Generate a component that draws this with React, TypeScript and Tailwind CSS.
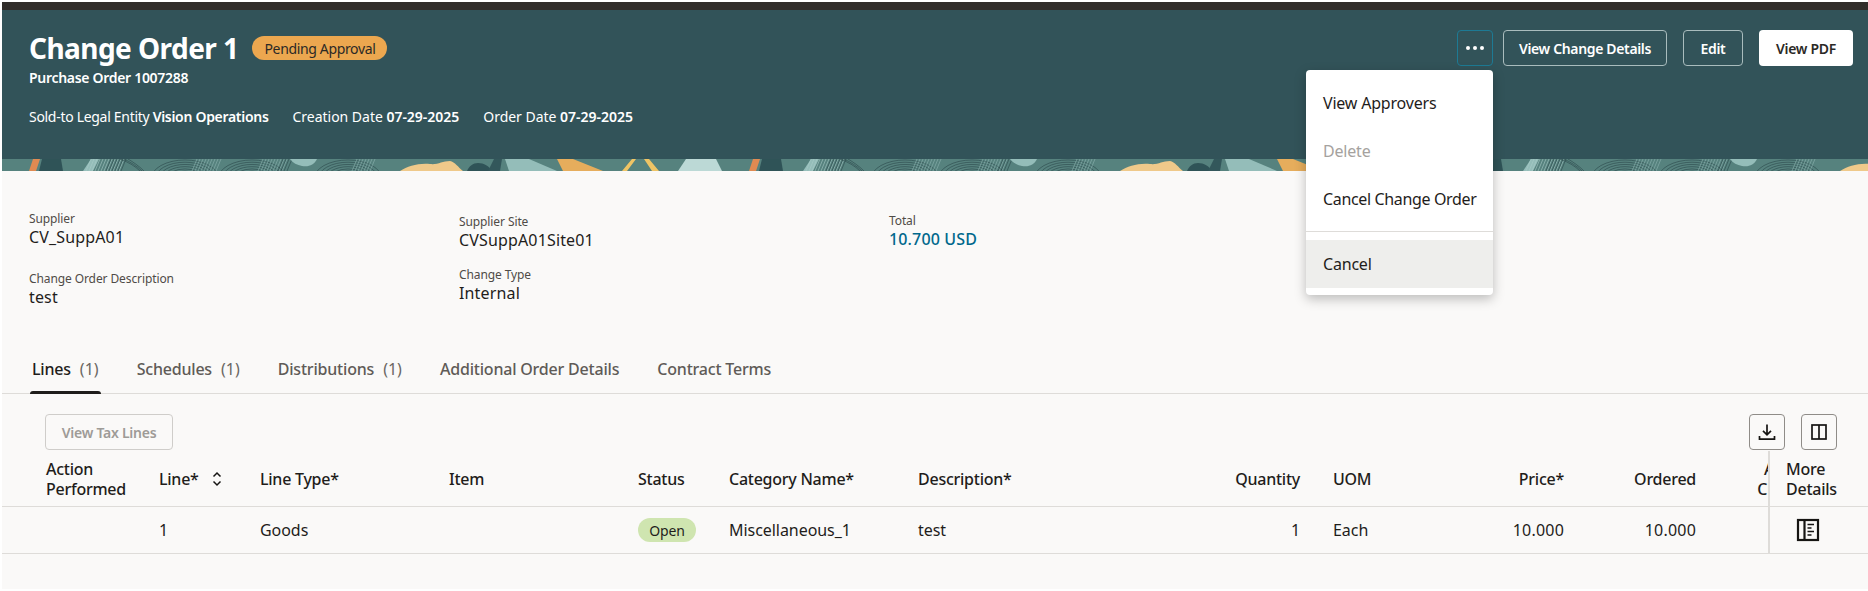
import React from "react";

function Banner() {
  const ellipses = (cx: number) => (
    <g fill="none" stroke="#2a474a" strokeWidth="0.6">
      {[14, 18, 22, 26, 30, 34].map((r) => (
        <ellipse key={r} cx={cx} cy={20} rx={r} ry={r * 0.56} />
      ))}
    </g>
  );
  const hatch = (x: number, n: number, color: string) => (
    <g stroke={color} strokeWidth="0.6">
      {Array.from({ length: n }).map((_, i) => (
        <line key={i} x1={x + i * 3} y1={12} x2={x + i * 3 + 5} y2={0} />
      ))}
    </g>
  );
  const unit = (ox: number) => (
    <g key={ox} transform={`translate(${ox} 0)`}>
      <path d="M27 12l4-12h7l-4 12z" fill="#e08a52" />
      <path d="M37 12l3-12h19l2 12z" fill="#2f5357" />
      <path d="M81 12l8-12h8l-6 12z" fill="#94bdb9" />
      {hatch(84, 12, "#a9cbc7")}
      {hatch(104, 6, "#2a474a")}
      <path d="M122 0c6 3 13 7 18 12M118 0c8 3 15 7 20 12M126 0c5 3 11 7 16 12" stroke="#2a474a" strokeWidth="0.6" fill="none" />
      {ellipses(183)}
      {hatch(190, 9, "#8fb5b1")}
      {ellipses(250)}
      {hatch(256, 9, "#8fb5b1")}
      {hatch(276, 4, "#2a474a")}
      <path d="M288 0h27c-3 6-8 8-15 7-5-1-9-3-12-7z" fill="#94bdb9" />
      {ellipses(346)}
      {hatch(350, 7, "#8fb5b1")}
      <path d="M398 12c8-5 18-8 30-7 8 1 12-3 20-3 5 1 8 6 13 10z" fill="#efc98a" />
      <path d="M465 12c2-5 6-8 11-8 6 0 11 3 14 8z" fill="#2f5357" />
      <path d="M492 0h8l-2 12h-12z" fill="#33575b" />
      <path d="M503 0h24l28 12h-48z" fill="#94bdb9" />
      <path d="M555 0h16l30 12h-40z" fill="#e6ad5c" />
      <path d="M630 0h4l-9 12h-5zM642 0h5l10 12h-7z" fill="#efc465" />
      <path d="M676 12l8-12h30l6 12z" fill="#bcd9d6" />
    </g>
  );
  return (
    <svg className="block h-[12px] w-full" viewBox="0 0 1866 12" preserveAspectRatio="none">
      <rect width="1866" height="12" fill="#56827e" />
      {unit(0)}
      {unit(720)}
      {unit(1440)}
    </svg>
  );
}

function HeaderBtn({ children, solid }: { children: React.ReactNode; solid?: boolean }) {
  return (
    <button
      className={
        solid
          ? "h-9 w-[94px] rounded-[4px] bg-white text-[14px] font-semibold tracking-[-0.3px] text-[#2b2926]"
          : "h-9 w-full rounded-[4px] border border-[#a9bcbd] text-[14px] font-semibold tracking-[-0.35px] text-white"
      }
    >
      {children}
    </button>
  );
}

function Field({ label, value, link, className }: { label: string; value: string; link?: boolean; className?: string }) {
  return (
    <div className={className}>
      <div className="text-[12px] leading-[16px] tracking-[-0.1px] text-[#4f4b47]">{label}</div>
      <div className={`text-[16px] leading-[20px] tracking-[0.15px] ${link ? "font-medium text-[#00688c]" : "text-[#1f1d1b]"}`}>{value}</div>
    </div>
  );
}

function Tab({ label, count, active }: { label: string; count?: number; active?: boolean }) {
  return (
    <div className="relative flex h-[50px] items-center px-[2px]">
      <span className={`text-[16px] font-medium tracking-[-0.2px] ${active ? "text-[#1f1d1b]" : "text-[#5f5b57]"}`}>{label}</span>
      {count !== undefined && <span className="ml-[9px] text-[16px] text-[#6b6763]">({count})</span>}
      {active && <div className="absolute bottom-0 left-0 right-0 h-[3px] rounded-t-[3px] bg-[#1f1d1b]" />}
    </div>
  );
}

function MoreIcon() {
  return (
    <svg width="24" height="24" viewBox="0 0 24 24" fill="none" stroke="#161513" strokeWidth="2.2">
      <rect x="2" y="2" width="20" height="20" />
      <path d="M8.5 2v20" />
      <path d="M11.5 6.5h6.5M11.5 10h4M11.5 13.5h6.5M11.5 17h4" strokeWidth="1.7" />
    </svg>
  );
}

const GRID = "grid grid-cols-[44px_113px_101px_189px_189px_91px_189px_189px_193px_164px_100px_132px_128px]";

export default function App() {
  return (
    <div className="h-[591px] w-[1868px] overflow-hidden bg-white pb-[2px] pl-[2px] pt-[2px] font-['Noto_Sans',sans-serif]">
      <div className="relative flex h-full flex-col bg-[#faf9f8]">
        <div className="h-[8px] shrink-0 bg-[#312d2a]" />
        <header className="flex h-[149px] shrink-0 items-start justify-between bg-[#325359] pl-[27px] pr-[15px] pt-[20px]">
          <div>
            <div className="flex h-9 items-center">
              <h1 className="text-[28px] font-bold leading-9 tracking-[-0.55px] text-white">Change Order 1</h1>
              <span className="ml-[14px] flex h-6 w-[135px] items-center justify-center rounded-full bg-[#eca74f] text-[14px] tracking-[-0.35px] text-[#2b2926]">
                Pending Approval
              </span>
            </div>
            <div className="mt-[2px] text-[14px] font-semibold leading-5 tracking-[-0.3px] text-white">Purchase Order 1007288</div>
            <div className="mt-[19px] flex gap-6 text-[14px] leading-5 text-white">
              <span className="tracking-[-0.3px]">Sold-to Legal Entity <b className="font-semibold">Vision Operations</b></span>
              <span className="tracking-[-0.02px]">Creation Date <b className="font-semibold">07-29-2025</b></span>
              <span className="tracking-[-0.02px]">Order Date <b className="font-semibold">07-29-2025</b></span>
            </div>
          </div>
          <div className="flex items-center">
            <button className="flex h-9 w-9 items-center justify-center gap-[3px] rounded-[4px] border border-[#1d7a94]">
              <i className="h-[4px] w-[4px] rounded-full bg-white" />
              <i className="h-[4px] w-[4px] rounded-full bg-white" />
              <i className="h-[4px] w-[4px] rounded-full bg-white" />
            </button>
            <div className="ml-[10px] w-[164px]"><HeaderBtn>View Change Details</HeaderBtn></div>
            <div className="ml-4 w-[60px]"><HeaderBtn>Edit</HeaderBtn></div>
            <div className="ml-4"><HeaderBtn solid>View PDF</HeaderBtn></div>
          </div>
        </header>
        <Banner />

        <section className="grid h-[118px] shrink-0 grid-cols-[430px_430px_300px] pl-[27px] pt-[40px]">
          <div>
            <Field label="Supplier" value="CV_SuppA01" />
            <Field label="Change Order Description" value="test" className="mt-[24px]" />
          </div>
          <div className="pt-[3px]">
            <Field label="Supplier Site" value="CVSuppA01Site01" />
            <Field label="Change Type" value="Internal" className="mt-[17px]" />
          </div>
          <div className="pt-[2px]">
            <Field label="Total" value="10.700 USD" link />
          </div>
        </section>

        <nav className="mt-[55px] flex h-[50px] shrink-0 gap-[34px] border-b border-[#dedcd9] pl-[28px]">
          <Tab label="Lines" count={1} active />
          <Tab label="Schedules" count={1} />
          <Tab label="Distributions" count={1} />
          <Tab label="Additional Order Details" />
          <Tab label="Contract Terms" />
        </nav>

        <div className="box-content flex h-[37px] shrink-0 items-start justify-between pl-[43px] pr-[31px] pt-[20px]">
          <button className="h-9 w-[128px] rounded-[4px] border border-[#cfcdca] text-[14px] font-semibold tracking-[-0.25px] text-[#9e9b97]">
            View Tax Lines
          </button>
          <div className="flex gap-4">
            <button className="flex h-9 w-9 items-center justify-center rounded-[4px] border border-[#8f8c88]">
              <svg width="20" height="20" viewBox="0 0 20 20" fill="none" stroke="#161513" strokeWidth="1.7">
                <path d="M10 2.5v10M6 8.8l4 4 4-4M2.5 14v3.2h15V14" />
              </svg>
            </button>
            <button className="flex h-9 w-9 items-center justify-center rounded-[4px] border border-[#8f8c88]">
              <svg width="20" height="20" viewBox="0 0 20 20" fill="none" stroke="#161513" strokeWidth="1.7">
                <rect x="3" y="3" width="14" height="14" />
                <path d="M10 3v14" />
              </svg>
            </button>
          </div>
        </div>

        <div className="flex h-[103px] shrink-0 items-stretch">
          <div className="w-[1766px] shrink-0 overflow-hidden">
            <div className={`${GRID} h-[56px] w-[1900px] items-center border-b border-[#dedcd9] text-[16px] font-medium leading-5 tracking-[-0.25px] text-[#1f1d1b]`}>
              <div />
              <div>Action<br />Performed</div>
              <div className="flex items-center gap-[12px]">
                Line*
                <svg width="12" height="18" viewBox="0 0 12 18" fill="none" stroke="#161513" strokeWidth="1.5">
                  <path d="M2.5 6.5L6 3l3.5 3.5M2.5 11.5L6 15l3.5-3.5" />
                </svg>
              </div>
              <div>Line Type*</div>
              <div>Item</div>
              <div>Status</div>
              <div>Category Name*</div>
              <div>Description*</div>
              <div className="text-right">Quantity</div>
              <div className="pl-[33px]">UOM</div>
              <div className="text-right">Price*</div>
              <div className="text-right">Ordered</div>
              <div className="text-right">Amount<br />Changed</div>
            </div>
            <div className={`${GRID} h-[47px] w-[1900px] items-center border-b border-[#dedcd9] text-[16px] tracking-[-0.05px] text-[#1f1d1b]`}>
              <div />
              <div />
              <div>1</div>
              <div>Goods</div>
              <div />
              <div>
                <span className="flex h-6 w-[58px] items-center justify-center rounded-full bg-[#cfe5b0] text-[14px] tracking-[-0.2px]">Open</span>
              </div>
              <div>Miscellaneous_1</div>
              <div>test</div>
              <div className="text-right">1</div>
              <div className="pl-[33px]">Each</div>
              <div className="text-right tracking-[0.2px]">10.000</div>
              <div className="text-right tracking-[0.2px]">10.000</div>
              <div />
            </div>
          </div>
          <div className="flex-1 border-l-2 border-[#dedcd9]">
            <div className="flex h-[56px] items-center border-b border-[#dedcd9] pl-[16px] text-[16px] font-medium leading-5 tracking-[-0.25px] text-[#1f1d1b]">
              <div>More<br />Details</div>
            </div>
            <div className="flex h-[47px] items-center border-b border-[#dedcd9] pl-[26px]">
              <MoreIcon />
            </div>
          </div>
        </div>

        <div className="absolute left-[1304px] top-[68px] z-10 w-[187px] rounded-[4px] bg-white pb-[7px] pt-[9px] text-[16px] tracking-[-0.2px] text-[#1f1d1b] shadow-[0_4px_12px_rgba(0,0,0,0.25)]">
          <div className="flex h-12 items-center whitespace-nowrap pl-[17px]">View Approvers</div>
          <div className="flex h-12 items-center whitespace-nowrap pl-[17px] text-[#a5a29e]">Delete</div>
          <div className="flex h-12 items-center whitespace-nowrap pl-[17px] tracking-[-0.35px]">Cancel Change Order</div>
          <div className="my-2 border-t border-[#dedcd9]" />
          <div className="flex h-12 items-center whitespace-nowrap bg-[#eeeeec] pl-[17px]">Cancel</div>
        </div>
      </div>
    </div>
  );
}
